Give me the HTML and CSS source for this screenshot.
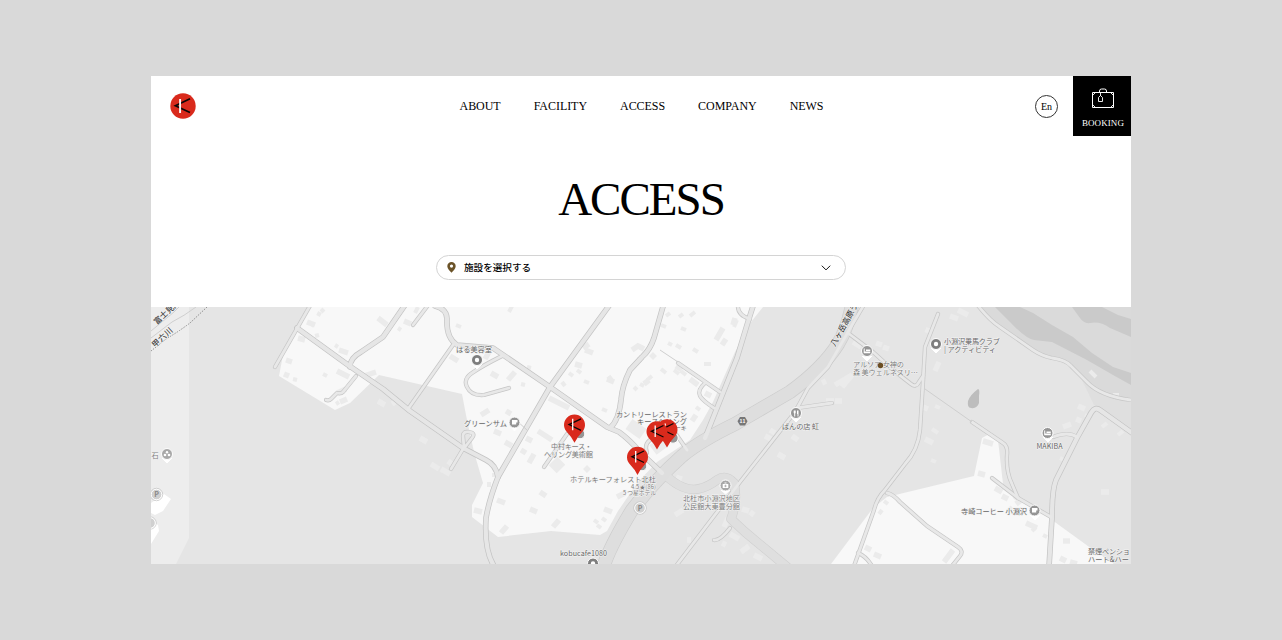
FILE: index.html
```html
<!DOCTYPE html>
<html lang="ja">
<head>
    <meta charset="UTF-8">
    <meta name="viewport" content="width=device-width, initial-scale=1.0">
    <title>ACCESS</title>
    <link rel="stylesheet" href="styles.css">
</head>
<body>
    <div class="page">
        <header class="header">
            <a class="logo" href="#">
                <svg width="26" height="26" viewBox="-13 -13 26 26">
                    <circle r="12.7" fill="#d92a1c"/>
                    <path d="M7-7.2-7.6-.2 7 6.6" fill="none" stroke="#0c0606" stroke-width="1.7"/>
                    <path d="M-2.9-7V7" stroke="#fff" stroke-width="1.9"/>
                </svg>
            </a>
            <nav class="nav">
                <a href="#">ABOUT</a>
                <a href="#">FACILITY</a>
                <a href="#">ACCESS</a>
                <a href="#">COMPANY</a>
                <a href="#">NEWS</a>
            </nav>
            <div class="header-right">
                <a class="lang" href="#">En</a>
                <a class="booking" href="#">
                    <svg width="24" height="22" viewBox="0 0 24 22" fill="none" stroke="#fff" stroke-width="1">
                        <path d="M1.500 4.500h21v15h-21zM8.500 4.500v-1.500q0-2 2-2h3q2 0 2 2v1.500"/>
                        <path d="M1.500 7.500l3-3M19.500 4.500l3 3M1.500 16.500l3 3M19.500 19.500l3-3M9.500 4.500v3.500M7.500 9.500l2-2 2 2v4h-4z" stroke-width=".9"/>
                    </svg>
                    <span>BOOKING</span>
                </a>
            </div>
        </header>

        <h1 class="title">ACCESS</h1>

        <div class="select">
            <svg width="9" height="11" viewBox="0 0 9 11">
                <path d="M4.500 0a4.200 4.200 0 0 1 4.200 4.200c0 2.500-2.500 4.600-4.200 6.600C2.800 8.800.3 6.700.3 4.200A4.200 4.200 0 0 1 4.500 0z" fill="#6b5328"/>
                <circle cx="4.500" cy="4.100" r="1.600" fill="#fff"/>
            </svg>
            <span class="select-text">施設を選択する</span>
            <svg width="10" height="6" viewBox="0 0 10 6" fill="none" stroke="#111">
                <path d="M.8.7 5 4.900 9.200.7"/>
            </svg>
        </div>

        <svg class="map" width="980" height="257" viewBox="151 307 980 257">
            <defs>
                <g id="highway">
                    <path d="M853 300Q848 328 838 344Q823 368 790 392L735 424Q700 441 682 456Q655 480 632 510Q609 548 603 568"/>
                </g>
                <g id="branch">
                    <path d="M662 472Q682 492 698 489Q708 487 717 480Q726 474 734 483Q738 500 731 519L745 532 787 567"/>
                </g>
                <g id="wide">
                    <path d="M405 305L383 337 361 352Q350 358 350 367"/>
                    <path d="M297 328L348 365 383 389 410 411 463 448 486 460Q496 465 498 477"/>
                    <path d="M435 306Q447 309 447 319Q446 338 457 345L493 348 550 387 607 427 619 432Q630 440 640 452L662 473"/>
                    <path d="M611 303L550 387 498 477Q489 500 486 518Q484 550 494 566"/>
                    <path d="M664 303L654 338Q650 350 642 357L630 370Q622 386 621 400Q619 420 610 428"/>
                    <path d="M754 303L747 325 737 358 705 438"/>
                    <path d="M1135 435L1100 410Q1095 406 1091 413L1077 438 1056 480Q1052 490 1052 517L1049 567"/>
                </g>
                <g id="narrow">
                    <path d="M311 304L275 367"/>
                    <path d="M356 376L343 392Q341 394 337 393L331 399Q329 401 326 400"/>
                    <path d="M429 304L413 325"/>
                    <path d="M453 345L408 409"/>
                    <path d="M502 356Q482 366 472 373Q463 379 467 387Q471 396 484 395L509 388"/>
                    <path d="M451 469L463 449"/>
                    <path d="M464 447L463 436Q463 431 469 432 476 433 472 438L465 447"/>
                    <path d="M544 467L567 434"/>
                    <path d="M678 363L720 392M705 383Q697 390 700 396 703 401 714 408"/>
                    <path d="M738 305Q737 315 750 319"/>
                    <path d="M647 453Q643 442 654 438M676 434L687 450"/>
                    <path d="M865 303L848 332 828 367 808 388 795 412 740 482 676 566"/>
                    <path d="M848 333L873 352 893 370 911 384Q916 388 919 382L923 376"/>
                    <path d="M938 314L925 347 923 382 920 430Q918 450 905 464L885 490Q877 498 874 510L854 566"/>
                    <path d="M887 493Q893 494 900 502L927 526 958 547Q964 551 960 556L952 566M858 553Q866 556 872 566"/>
                    <path d="M797 408L832 403"/>
                    <path d="M976 303Q989 320 1000 327L1033 350Q1042 356 1052 358 1066 360 1071 366L1087 382Q1100 396 1131 400H1136"/>
                    <path d="M1077 437Q1068 431 1053 437"/>
                    <path d="M972 422L1003 443Q1008 446 1007 455 1006 472 1012 484L1018 498"/>
                    <path d="M992 478L1018 498 1051 517"/>
                    <path d="M714 540Q720 541 730 528"/>
                </g>
            </defs>

            <!-- land -->
            <rect class="land" x="151" y="307" width="980" height="257"/>
            <path class="strip" d="M151 307h38v231l-13 26h-25z"/>
            <path class="hill" d="M976 304Q989 320 1000 327L1033 350 1067 363 1087 382 1110 395 1131 400V304z"/>
            <path class="hill" d="M1082 380L1094 405 1100 408 1131 432V400L1110 395z" opacity=".5"/>
            <path class="forest" d="M995 307L1010 322Q1026 339 1034 340L1052 342 1087 360 1113 375 1131 385V373L1113 367 1092 353 1073 337 1052 325 1033 313 1020 307z"/>
            <path class="forest" d="M1072 307L1080 318Q1084 324 1090 323 1100 321 1110 328L1131 337V319L1118 315 1102 307z"/>
            <path class="town" d="M308 307L283 355 279 376 335 410 350 403 379 375 462 394 466 415 474 452 483 483 472 505V517L498 537 551 531 600 535 607 531 618 511 638 482 657 462 690 440 703 420 713 402 735 352 751 322 763 307z"/>
            <path class="town" d="M831 564L873 508 887 497 974 476 982 438 991 433 998 440 1003 484 1018 499 1052 520 1092 549 1114 564z"/>
            <path class="lot" d="M151 503L164 494 171 499 163 511 155 515 151 513zM151 521L158 525 159 531 151 544z"/>
            <path class="pond" d="M978 389Q980 389 979 396L979 403Q977 409 971 408 967 408 968 401 970 395 978 389z"/>

            <!-- buildings, one short thick stroke each -->
            <path class="building b4" d="M321 309l3 3M318 316l2-4M309 322l5 4M315 336l4-1M335 345l3 2M323 374l4 2M293 379l4 1M336 404l3-2M398 328l3 2M415 313l3-6M456 325l5 2M470 372l2 3M527 367l4 1M509 312l3-6M562 382l3 4M569 373l4 3M577 370l4 3M584 381l5 2M602 409l5 2M521 384l4 1M492 475h4M489 482l0 5M451 440l3 2M661 369l5 4M640 384l4 2M637 359l5 1M666 316l4-3M679 317l4-3M661 325l5 2M681 328l5 2M693 349l5 3M668 343l4 2M676 345l5 3M674 370l5 4M681 371l5 4M690 316l5-4M647 380l5-4M634 387l3 3M704 364h7M734 327l3-7M696 407l4 3M594 520l4 3M597 525l4 3M602 518l4 3M884 501l4 3M879 514l3-4M1008 511l4-4M1014 499l3-3M1096 377l-6-6M1113 395l6 0M1060 458l4 2M1085 415l6 3M1102 427l5-4M1118 435l5-4M1032 531l4-4M1043 535l4 2M932 429l6 4M935 406l5 2M931 460l5 2"/>
            <path class="building b6" d="M337 393l9-4M286 360l6 2M284 374l5 2M298 338l7 2M307 322l8 3M339 350l9 3M340 402l7-3M337 371l12 6M364 376l12-4M378 318l9 7M404 321l7 3M450 356l8 5M491 373l7 4M485 359l4-7M508 380l7-8M526 438l6 3M481 415l8-5M494 431l7 3M505 442l7 4M521 450l5 3M529 463l5-9M538 431l14 9M549 398l20 10M540 492l6 4M530 509l7 3M553 527l6-7M585 471l4-4M474 510l8 2M497 500l8 3M501 533l6-7M506 411l5 3M607 379l7 3M575 364l7 2M585 350l8 3M617 497l8-4M604 509l8 3M583 348l6-4"/>
            <path class="building b6" d="M632 350l6-4 6 3M716 340l7-12M722 345l4-6M733 325l2-7M690 379l8 6M705 393l6 3M692 421l4-6M651 354l4 4M644 384l5-4M608 380l4-3M676 366l6 4M420 438l7 4M431 464l8 5M441 469l9 5M448 461l5 4M378 401l7 4M392 404l4-3M853 342l8 5M876 343l6 2M883 347l6 2M835 385l17-10-10 12M826 401h8M835 401h7M822 383l4-2M765 436l6 3M770 430l5 3M792 436l6 4M778 454l7 4M935 371l4-9M950 316l8 3M958 310l10 5M927 333l2-5M923 407l5 2M925 439l8 4M983 441l10 3M978 473l7 2M1078 406l7 3M1063 427l8-3M1076 419l5 2M995 488l7 4M1002 496l6 3M1016 504l5-4M1026 523l11 5M1101 492h8M1063 541h7M1060 558l6 3M1070 562l7 2M944 562l9-12M874 554l7 3M865 547l6 3M675 515l8-5M724 527l4-9M731 514h6M730 534l9 5M741 552l8-6M754 555l8 4M742 509l7 2M750 512l4 3M722 543l4 2M676 477l6 2M687 540h4"/>
            <path class="building b14" d="M629 424l14 10M553 461l8 8M653 450l12-9"/>

            <!-- roads: casing first, surface on top -->
            <use class="highway-casing" href="#highway"/>
            <use class="branch-casing" href="#branch"/>
            <use class="wide-casing" href="#wide"/>
            <use class="narrow-casing" href="#narrow"/>
            <use class="branch-fill" href="#branch"/>
            <use class="highway-fill" href="#highway"/>
            <use class="wide-fill" href="#wide"/>
            <use class="narrow-fill" href="#narrow"/>
            <path class="path" d="M660 350L678 362M925 389L972 422M517 421L527 430"/>
            <path class="path" d="M151 331L174 312 180 306M151 338L172 322Q184 316 196 307"/>
            <path class="rail" d="M207 307L190 323Q178 332 166 339L151 351"/>

            <!-- place icons -->
            <g class="spot dark">
                <path d="M472 364l5 5 5-5M931 348l5 5 5-5M588 568l5 5 5-5"/>
                <circle cx="477" cy="360" r="5.500"/><circle cx="936" cy="344" r="5.500"/><circle cx="593" cy="563.500" r="5.500"/>
            </g>
            <g class="spot">
                <path d="M510 426l4.500 5 4.500-5M791 417l5 5 5-5M862 356l5 5 5-5M1043 437l5 5 5-5M1030 515l5 5 5-5"/>
                <circle cx="514.500" cy="422.500" r="5.500"/><circle cx="796" cy="413" r="5.500"/><circle cx="867" cy="351" r="5.500"/>
                <circle cx="1047.500" cy="433" r="5.500"/><circle cx="1034.500" cy="510.500" r="5.500"/>
                <circle cx="673" cy="438" r="5.200"/><circle cx="580" cy="434" r="4.800"/><circle cx="642" cy="466" r="4.800"/>
            </g>
            <g class="spot pale">
                <path d="M721 490l4.500 4 4.500-4M162 458l5 5 5-5"/>
                <circle cx="725.500" cy="485.500" r="5.500"/><circle cx="167" cy="454" r="5.500"/>
            </g>
            <g class="parking">
                <circle class="ring" cx="156.500" cy="494.500" r="6.200"/><circle class="ring" cx="640" cy="508" r="6.200"/><circle class="ring" cx="150" cy="523" r="6.200"/>
                <circle cx="156.500" cy="494.500" r="5.300"/><circle cx="640" cy="508" r="5.300"/><circle cx="150" cy="523" r="5.300"/>
                <text x="156.500" y="497.300">P</text><text x="640" y="510.800">P</text>
            </g>
            <g fill="#fff">
                <circle cx="477" cy="360" r="2.200"/><circle cx="936" cy="344" r="2.200"/><circle cx="593" cy="563.500" r="2.200"/>
                <path d="M512 420h5.500v2.500h-1.300v2h-4.200zM1032 508h5.500v2.500h-1.300v2h-4.200z"/>
                <path d="M793.700 410.500h2v2.500l-.5.500v3h-1v-3l-.5-.5zM797 410.500h1.500v6h-1v-2.500h-.5z"/>
                <path d="M863.700 348.500h1v3h5.600v1.800h-6.600zM866 349.500h4.300v1.500h-4.300zM1044.200 430.500h1v3h5.600v1.800h-6.600zM1046.500 431.500h4.300v1.500h-4.300z"/>
                <path d="M722.700 484h5.600v4h-5.600zM724.500 482.500h2v1h-2z"/>
                <circle cx="167" cy="452.300" r="1.200"/><circle cx="165" cy="455" r="1.300"/><circle cx="169" cy="455" r="1.300"/>
            </g>
            <path d="M725.500 484.700v2.500M724.200 486h2.500" stroke="#aaa" stroke-width=".8"/>
            <path d="M740 417h5l2.500 4.200-2.500 4.200h-5l-2.500-4.200z" fill="#777"/>
            <text class="route" x="742.500" y="423.200">11</text>

            <!-- labels -->
            <g class="label">
                <text x="456" y="351.500" textLength="36">はる美容室</text>
                <text x="464" y="426" textLength="43">グリーンサム</text>
                <text x="616" y="416.500" textLength="71">カントリーレストラン</text>
                <text x="637" y="424" textLength="50">キースヘリング</text>
                <text class="tiny" x="675" y="430">ーキ</text>
                <text x="782" y="429" textLength="37">ぱんの店 虹</text>
                <text x="944" y="344" textLength="56">小淵沢乗馬クラブ</text>
                <text x="944" y="351.500" textLength="52">| アクティビティ</text>
                <text x="1036.500" y="448.500" textLength="26">MAKIBA</text>
                <text x="961" y="514" textLength="66">寺崎コーヒー 小淵沢</text>
                <text x="1088" y="554" textLength="42">禁煙ペンショ</text>
                <text x="1088" y="561.500" textLength="41">ハート&amp;ハー</text>
                <text x="560" y="555.500" textLength="47">kobucafe1080</text>
            </g>
            <g class="label light">
                <text x="551" y="449" textLength="41">中村キース・</text>
                <text x="544" y="456.500" textLength="49">ヘリング美術館</text>
                <text x="570" y="481.500" textLength="86">ホテルキーフォレスト北杜</text>
                <text class="tiny" x="631" y="488.500" textLength="25">4.5★(86)</text>
                <text class="tiny" x="623" y="495" textLength="33">5 つ星ホテル</text>
                <text x="683" y="501" textLength="57">北杜市小淵沢地区</text>
                <text x="683" y="508.500" textLength="57">公民館大東豊分館</text>
                <text x="853" y="367" textLength="51">アルソア 女神の</text>
                <text x="853" y="374.500" textLength="65">森 美ウェルネスリ…</text>
                <text x="151.500" y="457.500">石</text>
            </g>
            <g class="label strong">
                <text transform="translate(157 325) rotate(-43)">富士見高</text>
                <text transform="translate(155 348) rotate(-43)" textLength="25">甲六川</text>
                <text transform="translate(835 347) rotate(-61)">八ヶ岳高原ライ</text>
            </g>

            <circle cx="880.500" cy="365.500" r="2.700" fill="#6b4e24"/>

            <!-- pins -->
            <defs>
                <g id="pin">
                    <path d="M0 18.500Q-3 12.500-7 8.500A10.500 10.500 0 1 1 7 8.500Q3 12.500 0 18.500z" fill="#d92a1c"/>
                    <path d="M6.500-5.500-5.500.3 6.500 6" fill="none" stroke="#0c0606" stroke-width="1.300"/>
                    <path d="M-1.800-5.500V6" stroke="#fff" stroke-width="1.300"/>
                </g>
            </defs>
            <use href="#pin" x="667" y="429"/>
            <use href="#pin" x="657" y="431"/>
            <use href="#pin" x="574.500" y="424.300"/>
            <use href="#pin" x="637.500" y="456.500"/>
        </svg>
    </div>
</body>
</html>
```

FILE: styles.css
```css
body {
    margin: 0;
    background: #d9d9d9;
    font-family: "Liberation Serif", "Noto Sans CJK JP", serif;
    color: #000;
}

a {
    color: inherit;
    text-decoration: none;
}

.page {
    width: 980px;
    height: 488px;
    margin: 76px auto 0;
    background: #fff;
    overflow: hidden;
}

.header {
    display: flex;
    justify-content: space-between;
    height: 60px;
}

.logo {
    width: 94px;
    padding: 17px 0 0 19px;
    box-sizing: border-box;
}

.nav {
    display: flex;
    gap: 33px;
    margin-left: 3px;
    font-size: 12px;
    line-height: 60px;
    letter-spacing: -0.05px;
}

.header-right {
    display: flex;
    align-items: center;
    gap: 15px;
}

.lang {
    width: 21px;
    height: 21px;
    border: 1px solid #333;
    border-radius: 50%;
    font-size: 10px;
    line-height: 21px;
    text-align: center;
}

.booking {
    display: flex;
    flex-direction: column;
    align-items: center;
    width: 58px;
    height: 60px;
    background: #000;
    color: #fff;
    font-size: 9px;
    letter-spacing: 0.1px;
}

.booking svg {
    margin: 12px 0 0 2px;
}

.booking span {
    margin: 8px 0 0 2px;
    line-height: 10px;
}

.title {
    margin: 35px 0 0;
    font-size: 47px;
    font-weight: normal;
    line-height: 56px;
    letter-spacing: -2px;
    text-align: center;
}

.select {
    display: flex;
    align-items: center;
    width: 384px;
    height: 23px;
    margin: 28px auto 27px;
    padding: 0 14px 0 10px;
    border: 1px solid #d4d4d4;
    border-radius: 13px;
}

.select-text {
    flex: 1;
    margin-left: 8px;
    font-family: "Noto Sans CJK JP", sans-serif;
    font-size: 9.6px;
    font-weight: 500;
    line-height: 23px;
}

/* map */
.map {
    display: block;
    font-family: "Noto Sans CJK JP", sans-serif;
}

.land { fill: #e5e5e5; }
.strip { fill: #ededed; }
.hill { fill: #dadada; }
.forest { fill: #cacaca; }
.town { fill: #f8f8f8; }
.lot { fill: #fff; }
.pond { fill: #bdbdbd; }

.building {
    fill: none;
    stroke: #ebebeb;
}

.b4 { stroke-width: 4; }
.b6 { stroke-width: 5.5; }
.b14 { stroke-width: 12; }

.map use[class] {
    fill: none;
    stroke-linecap: round;
    stroke-linejoin: round;
}

.highway-casing { stroke: #cdcdcd; stroke-width: 14; }
.highway-fill { stroke: #dedede; stroke-width: 12.6; }
.branch-casing { stroke: #d0d0d0; stroke-width: 9.5; }
.branch-fill { stroke: #dfdfdf; stroke-width: 8.3; }
.wide-casing { stroke: #c3c3c3; stroke-width: 5.6; }
.wide-fill { stroke: #e6e6e6; stroke-width: 4.2; }
.narrow-casing { stroke: #c6c6c6; stroke-width: 4.2; }
.narrow-fill { stroke: #e8e8e8; stroke-width: 2.8; }

.path {
    fill: none;
    stroke: #cfcfcf;
}

.rail {
    fill: none;
    stroke: #888;
    stroke-width: .9;
    stroke-dasharray: 1.5 1.2;
}

.spot {
    fill: #959595;
    stroke: #fff;
    stroke-width: 1;
}

.spot path { fill: #fff; }
.spot.dark { fill: #7e7e7e; }
.spot.pale { fill: #a8a8a8; }

.parking {
    fill: #d0d0d0;
    stroke: #fff;
    stroke-width: 1;
}

.parking .ring {
    fill: none;
    stroke: #bbb;
    stroke-width: .7;
}

.parking text {
    fill: #888;
    stroke: none;
    font-size: 7px;
    font-weight: bold;
    text-anchor: middle;
}

.route {
    fill: #fff;
    font-size: 5px;
    font-weight: bold;
    text-anchor: middle;
}

.label {
    fill: #666;
    stroke: #f4f4f4;
    stroke-width: 1;
    paint-order: stroke;
    font-size: 7.2px;
}

.light { fill: #7d7d7d; }
.tiny { font-size: 5.8px; }

.strong {
    fill: #444;
    font-size: 8px;
    font-weight: 500;
}
```
